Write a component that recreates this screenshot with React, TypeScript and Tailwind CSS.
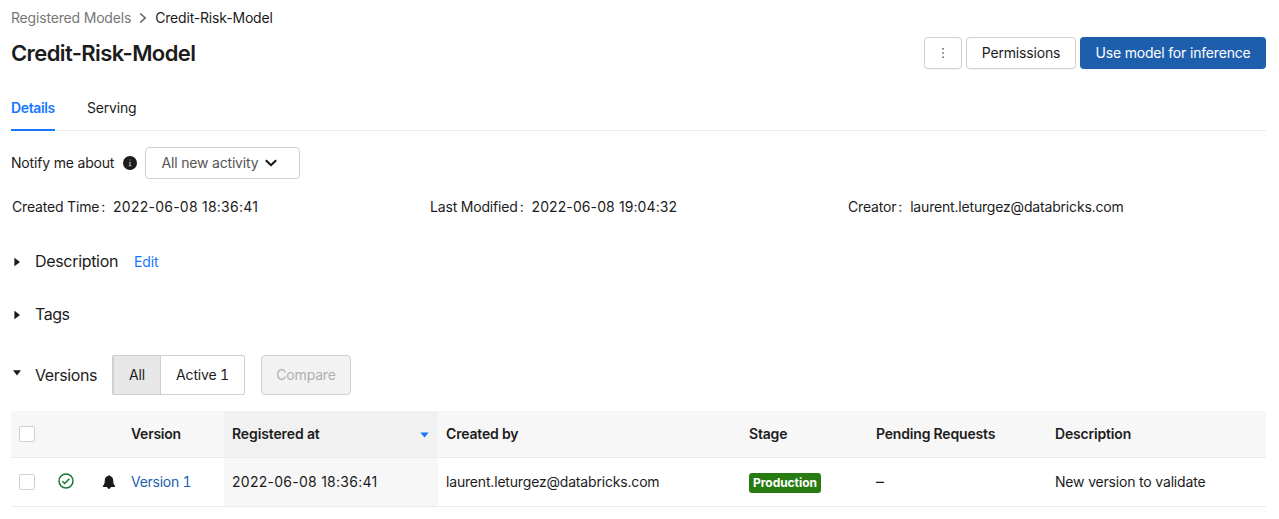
import React from "react";

function Field({ label, value, tracking = "" }: { label: string; value: string; tracking?: string }) {
  return (
    <div className="flex w-[418.6px] items-center">
      <span>{label}</span>
      <span className="mr-2 ml-0.5">:</span>
      <span className={tracking}>{value}</span>
    </div>
  );
}

function CaretRight() {
  return (
    <svg width="7" height="10" viewBox="0 0 7 10" className="mt-0.5 mr-[14px] shrink-0" fill="#1a1a1a">
      <path d="M0.4 0.8 L6 5 L0.4 9.2 Z" />
    </svg>
  );
}

function Checkbox() {
  return <span className="block h-4 w-4 rounded-[2px] border border-[#d0d0d0] bg-white" />;
}

const columns = "grid grid-cols-[47px_44px_21px_101px_214px_303px_127px_179px_1fr]";

export default function App() {
  return (
    <div className="h-[519px] w-[1279px] overflow-hidden bg-white pr-[13px] pl-[11px] font-['Inter','Liberation_Sans',sans-serif] text-[14px] leading-5 tracking-[-0.18px] whitespace-nowrap text-[#1c1c1c]">
      <nav className="flex h-9 items-center">
        <span className="text-[#777]">Registered Models</span>
        <svg width="8" height="10" viewBox="0 0 8 10" className="mx-[8px]" fill="none" stroke="#666" strokeWidth="1.6">
          <path d="M1.2 0.5 L6.2 5 L1.2 9.5" />
        </svg>
        <span>Credit-Risk-Model</span>
      </nav>

      <header className="mt-px flex h-8 items-center">
        <h1 className="flex-1 text-[22px] leading-8 font-semibold tracking-[-0.6px]">Credit-Risk-Model</h1>
        <div className="flex gap-1">
          <button className="flex h-8 w-[38px] items-center justify-center rounded-[4px] border border-[#d0d0d0] bg-white shadow-[0_1px_1px_rgba(0,0,0,0.04)]">
            <svg width="4" height="12" viewBox="0 0 4 12" fill="#555">
              <path d="M1.3 1h1.5v1.5h-1.5zM1.3 5.2h1.5v1.5h-1.5zM1.3 9.4h1.5v1.5h-1.5z" />
            </svg>
          </button>
          <button className="flex h-8 w-[110px] items-center justify-center rounded-[4px] border border-[#d0d0d0] bg-white shadow-[0_1px_1px_rgba(0,0,0,0.04)]">
            Permissions
          </button>
          <button className="flex h-8 w-[186px] items-center justify-center rounded-[4px] bg-[#1d5fad] text-white">
            Use model for inference
          </button>
        </div>
      </header>

      <div className="mt-[17px] flex h-[45px] gap-8 border-b border-[#ebebeb]">
        <div className="h-[45px] w-11 border-b-2 border-[#1677ff] pt-3 font-semibold tracking-[-0.38px] text-[#1677ff]">Details</div>
        <div className="pt-3">Serving</div>
      </div>

      <div className="mt-4 flex h-8 items-center">
        <span className="w-[104px]">Notify me about</span>
        <svg width="14" height="14" viewBox="0 0 14 14" className="ml-2">
          <circle cx="7" cy="7" r="7" fill="#1c1c1c" />
          <path d="M6.5 3.4h1.1v1.2h-1.1zM5.8 5.9h1.8v3.6h0.8v0.7h-2.8v-0.7h0.9v-2.9h-0.7z" fill="#bbb" />
        </svg>
        <button className="ml-2 flex h-8 w-[155px] items-center rounded-[4px] border border-[#d0d0d0] pl-[15.5px] text-[#555]">
          <span>All new activity</span>
          <svg width="12" height="8" viewBox="0 0 12 8" className="ml-[7px]" fill="none" stroke="#111" strokeWidth="2">
            <path d="M0.8 1.2 L6 6.2 L11.2 1.2" />
          </svg>
        </button>
      </div>

      <div className="mt-[18px] ml-px flex h-5">
        <Field label="Created Time" value="2022-06-08 18:36:41" tracking="tracking-[0.24px]" />
        <Field label="Last Modified" value="2022-06-08 19:04:32" tracking="tracking-[0.1px]" />
        <Field label="Creator" value="laurent.leturgez@databricks.com" />
      </div>

      <section className="mt-8 flex h-6 items-center pl-[3px] text-[16px]">
        <CaretRight />
        <span className="tracking-[-0.32px]">Description</span>
        <a className="mt-0.5 ml-4 text-[14px] text-[#1677ff]">Edit</a>
      </section>

      <section className="mt-[29px] flex h-6 items-center pl-[3px] text-[16px]">
        <CaretRight />
        <span className="tracking-[-0.5px]">Tags</span>
      </section>

      <section className="mt-[29px] flex h-10 items-center pl-0.5">
        <svg width="8" height="6" viewBox="0 0 8 6" className="mr-[14px] mb-1" fill="#1a1a1a">
          <path d="M0 0.3H8L4 5.6Z" />
        </svg>
        <span className="w-[62px] text-[16px] tracking-[-0.42px]">Versions</span>
        <div className="ml-[15px] flex h-10 w-[133px] rounded-[2px] border border-[#d0d0d0]">
          <div className="flex w-12 items-center justify-center border-r border-l border-[#d0d0d0] bg-[#e7e7e7]">All</div>
          <div className="flex flex-1 items-center justify-center tabular-nums">Active 1</div>
        </div>
        <button className="ml-4 flex h-10 w-[90px] items-center justify-center rounded-[4px] border border-[#d0d0d0] bg-[#f2f2f2] text-[#b0b0b0]">
          Compare
        </button>
      </section>

      <div className="mt-4">
        <div className={`${columns} h-[47px] rounded-t-[2px] border-b border-[#ebebeb] bg-[#f7f7f7] font-semibold`}>
          <div className="flex items-center pl-2"><Checkbox /></div>
          <div />
          <div />
          <div className="flex items-center pl-2 tracking-[-0.26px]">Version</div>
          <div className="flex items-center justify-between bg-[#f1f1f1] pr-[9px] pl-2">
            <span className="tracking-[-0.12px]">Registered at</span>
            <svg width="9" height="6" viewBox="0 0 9 6" className="mt-px" fill="#1677ff"><path d="M0.3 0.4H8.7L4.5 5.5Z" /></svg>
          </div>
          <div className="flex items-center pl-2">Created by</div>
          <div className="flex items-center pl-2">Stage</div>
          <div className="flex items-center pl-2">Pending Requests</div>
          <div className="flex items-center pl-2">Description</div>
        </div>
        <div className={`${columns} h-[49px] border-b border-[#ebebeb]`}>
          <div className="flex items-center pl-2"><Checkbox /></div>
          <div className="flex items-center pb-0.5">
            <svg width="16" height="16" viewBox="0 0 16 16" fill="none" stroke="#16792f" strokeWidth="1.5">
              <circle cx="8" cy="8" r="7" />
              <path d="M4.3 8.2 L6.8 10.5 L11.3 5.7" />
            </svg>
          </div>
          <div className="flex items-center">
            <svg width="14" height="14" viewBox="0 0 14 14" fill="#1a1a1a">
              <path d="M7 0.2C7.6 0.2 8 0.6 8 1.1C10 1.6 11.2 3.2 11.2 5.2C11.2 8.4 11.8 9.6 12.9 10.6C13.4 11.1 13.1 12 12.5 12H8.8C8.7 13 8 13.8 7 13.8C6 13.8 5.3 13 5.2 12H1.5C0.9 12 0.6 11.1 1.1 10.6C2.2 9.6 2.8 8.4 2.8 5.2C2.8 3.2 4 1.6 6 1.1C6 0.6 6.4 0.2 7 0.2Z" />
            </svg>
          </div>
          <div className="flex items-center pl-2 tracking-[-0.27px] text-[#1d5fad] tabular-nums">Version 1</div>
          <div className="flex items-center bg-[#f7f7f7] pl-2 tracking-[0.26px]">2022-06-08 18:36:41</div>
          <div className="flex items-center pl-2">laurent.leturgez@databricks.com</div>
          <div className="flex items-center pt-px pl-2">
            <span className="flex h-5 w-[72px] items-center justify-center rounded-[3px] bg-[#277c11] text-[12px] font-bold tracking-[-0.05px] text-white">Production</span>
          </div>
          <div className="flex items-center pb-0.5 pl-2 text-[16px]">–</div>
          <div className="flex items-center pl-2">New version to validate</div>
        </div>
      </div>
    </div>
  );
}
